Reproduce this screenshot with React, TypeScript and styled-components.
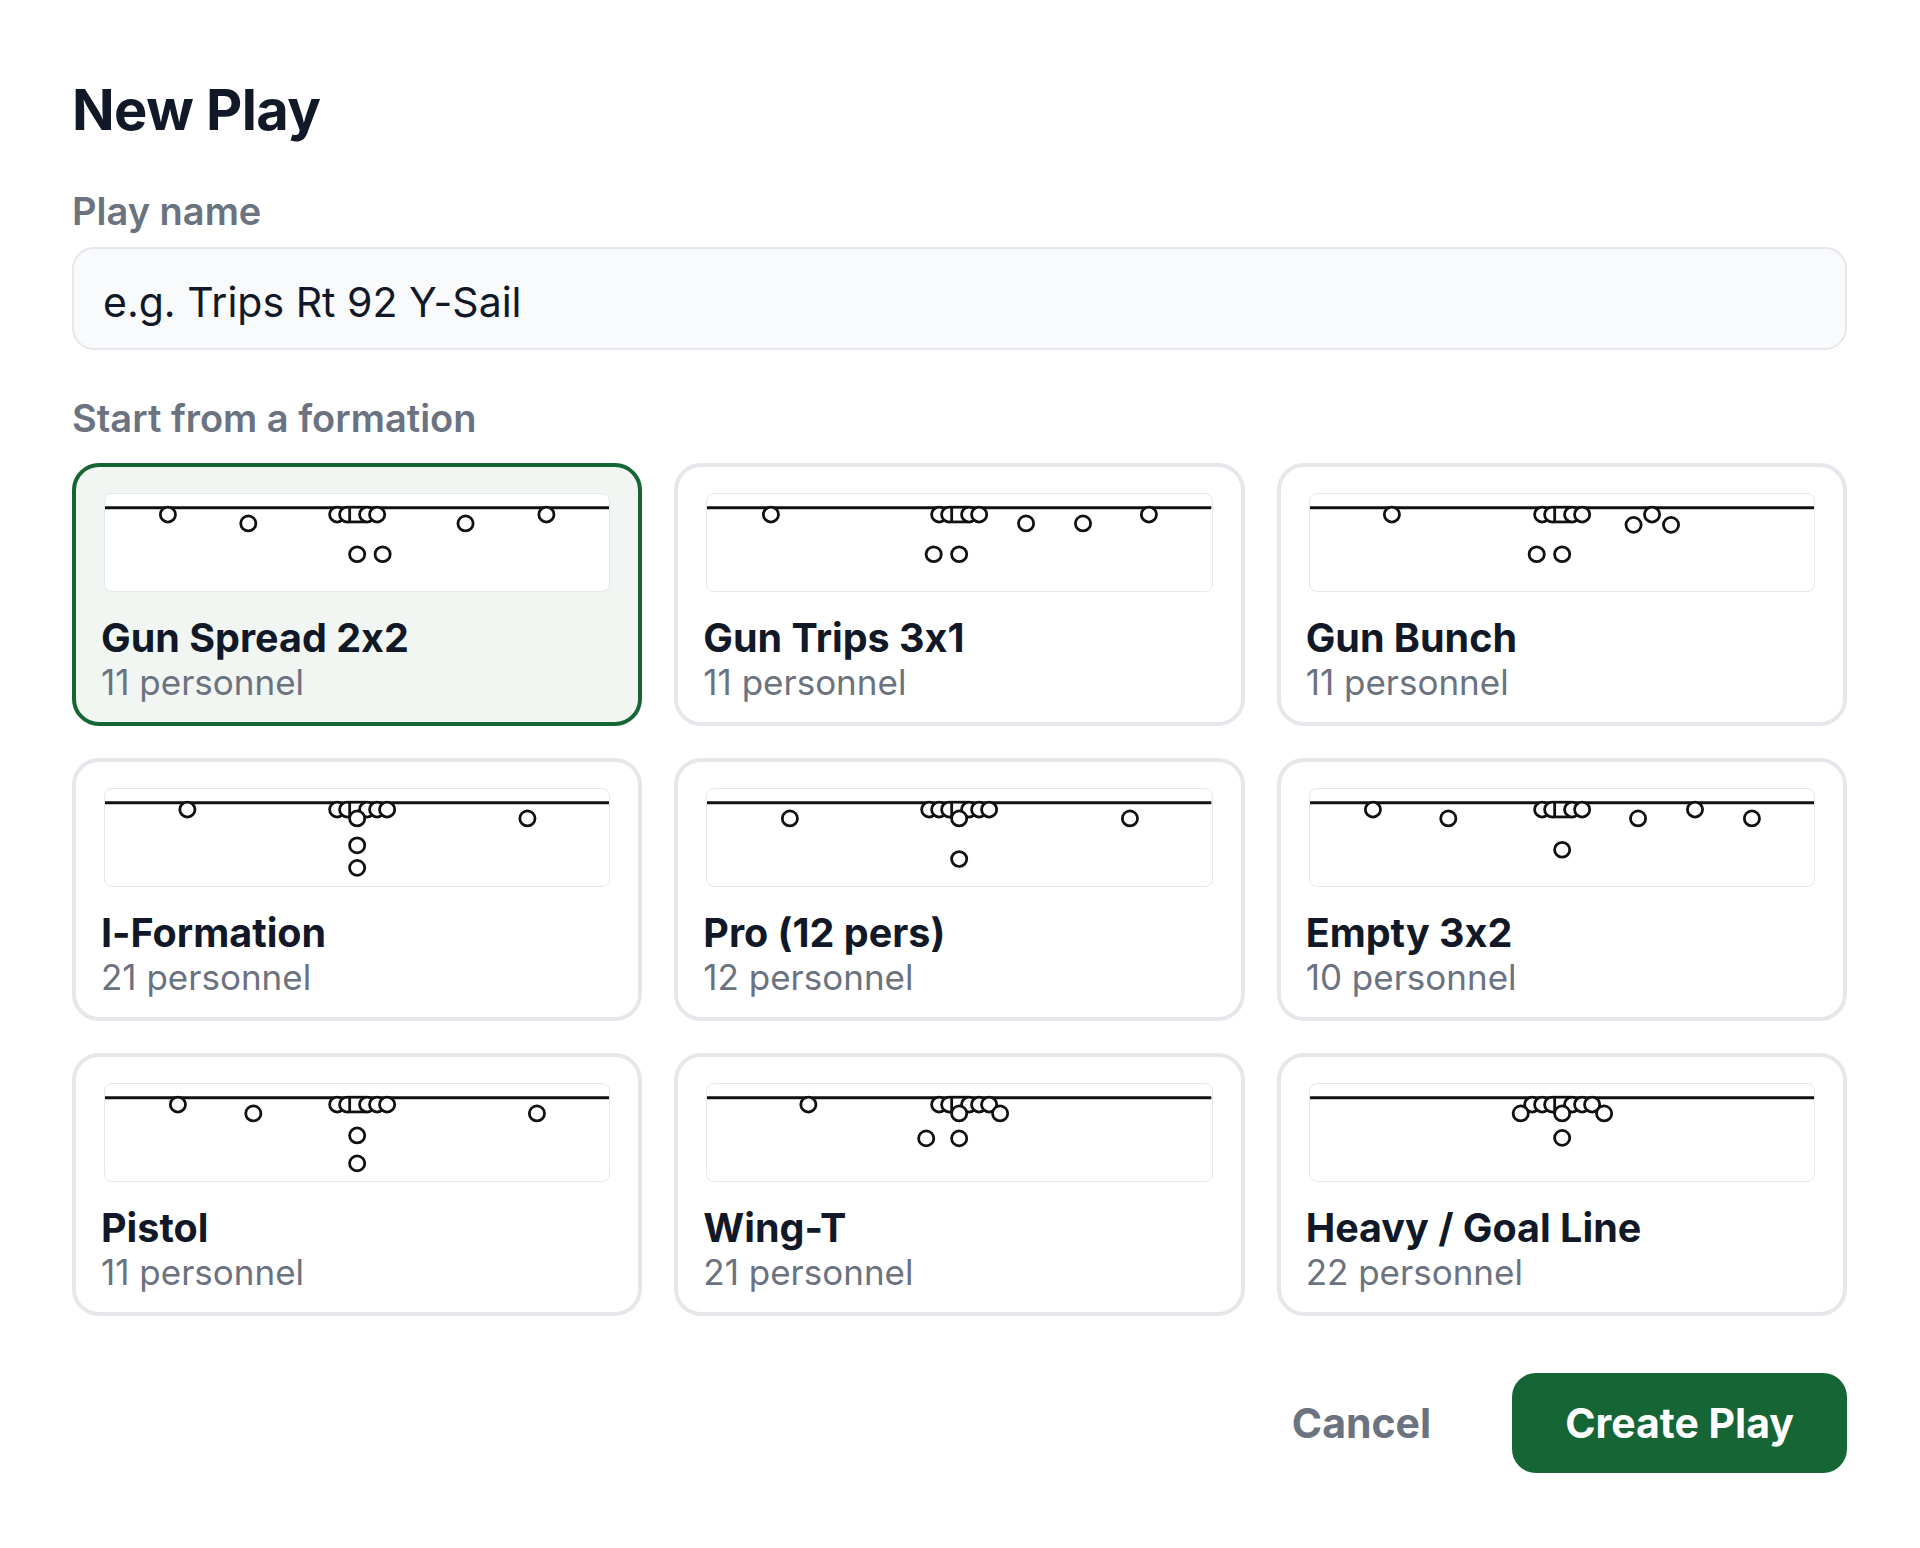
import React, { useState } from 'react';
import styled, { createGlobalStyle } from 'styled-components';

const GlobalStyle = createGlobalStyle`
	* {
		box-sizing: border-box;
		font-feature-settings: "calt" 0;
		font-variant-ligatures: no-contextual;
	}
	body {
		margin: 0;
		background: #ffffff;
		font-family: Inter, "Noto Sans", "Liberation Sans", sans-serif;
		color: #111827;
	}
`;

type Player = { x: number; y: number; c?: boolean };

interface Formation {
	name: string;
	personnel: string;
	players: Player[];
}

// preview coordinates: 505 wide, 99 tall, line of scrimmage at y=14
const ON = 21;
const OFF = 30;

const ol5 = (): Player[] => [
	{ x: 232.5, y: ON },
	{ x: 242.5, y: ON },
	{ x: 252.5, y: ON, c: true },
	{ x: 262.5, y: ON },
	{ x: 272.5, y: ON },
];
const line6 = (): Player[] => [...ol5(), { x: 282.5, y: ON }];
const line7 = (): Player[] => [{ x: 222.5, y: ON }, ...ol5(), { x: 282.5, y: ON }];

const formations: Formation[] = [
	{
		name: 'Gun Spread 2x2',
		personnel: '11 personnel',
		players: [
			{ x: 63, y: ON },
			{ x: 143.5, y: OFF },
			...ol5(),
			{ x: 361, y: OFF },
			{ x: 442, y: ON },
			{ x: 252.5, y: 61.5 },
			{ x: 278, y: 61.5 },
		],
	},
	{
		name: 'Gun Trips 3x1',
		personnel: '11 personnel',
		players: [
			{ x: 64, y: ON },
			...ol5(),
			{ x: 319.5, y: OFF },
			{ x: 376.5, y: OFF },
			{ x: 442.5, y: ON },
			{ x: 227, y: 61.5 },
			{ x: 252.5, y: 61.5 },
		],
	},
	{
		name: 'Gun Bunch',
		personnel: '11 personnel',
		players: [
			{ x: 82, y: ON },
			...ol5(),
			{ x: 324, y: 31.5 },
			{ x: 342.5, y: ON },
			{ x: 361.5, y: 31.5 },
			{ x: 227, y: 61.5 },
			{ x: 252.5, y: 61.5 },
		],
	},
	{
		name: 'I-Formation',
		personnel: '21 personnel',
		players: [
			{ x: 82.5, y: ON },
			...line6(),
			{ x: 252.5, y: OFF },
			{ x: 423, y: OFF },
			{ x: 252.5, y: 57.5 },
			{ x: 252.5, y: 80.5 },
		],
	},
	{
		name: 'Pro (12 pers)',
		personnel: '12 personnel',
		players: [
			{ x: 83, y: OFF },
			...line7(),
			{ x: 252.5, y: OFF },
			{ x: 423.5, y: OFF },
			{ x: 252.5, y: 71.5 },
		],
	},
	{
		name: 'Empty 3x2',
		personnel: '10 personnel',
		players: [
			{ x: 63, y: ON },
			{ x: 138.5, y: OFF },
			...ol5(),
			{ x: 328.5, y: OFF },
			{ x: 385.5, y: ON },
			{ x: 442.5, y: OFF },
			{ x: 252.5, y: 62 },
		],
	},
	{
		name: 'Pistol',
		personnel: '11 personnel',
		players: [
			{ x: 73, y: ON },
			{ x: 148.5, y: OFF },
			...line6(),
			{ x: 432.5, y: OFF },
			{ x: 252.5, y: 52.5 },
			{ x: 252.5, y: 81 },
		],
	},
	{
		name: 'Wing-T',
		personnel: '21 personnel',
		players: [
			{ x: 101.5, y: ON },
			...line6(),
			{ x: 252.5, y: OFF },
			{ x: 293.5, y: OFF },
			{ x: 219.5, y: 55.5 },
			{ x: 252.5, y: 55.5 },
		],
	},
	{
		name: 'Heavy / Goal Line',
		personnel: '22 personnel',
		players: [
			...line7(),
			{ x: 211, y: OFF },
			{ x: 294.5, y: OFF },
			{ x: 252.5, y: OFF },
			{ x: 252.5, y: 55 },
		],
	},
];

const FieldDiagram: React.FC<{ players: Player[] }> = ({ players }) => (
	<svg width='100%' height='100%' viewBox='0 0 505 99' preserveAspectRatio='none'>
		<line x1='0' y1='14' x2='505' y2='14' stroke='#111111' strokeWidth='3' />
		{players.map((p, i) =>
			p.c ? (
				<rect key={i} x={p.x - 7.5} y={p.y - 7.5} width='15' height='15' fill='#fff' stroke='#111' strokeWidth='2.8' />
			) : (
				<circle key={i} cx={p.x} cy={p.y} r='7.6' fill='#fff' stroke='#111' strokeWidth='2.8' />
			)
		)}
	</svg>
);

const App: React.FC = () => {
	const [selected, setSelected] = useState(0);
	const [name, setName] = useState('');

	return (
		<>
			<GlobalStyle />
			<Page>
				<Title>New Play</Title>
				<FieldLabel htmlFor='play-name'>Play name</FieldLabel>
				<NameInput
					id='play-name'
					value={name}
					placeholder='e.g. Trips Rt 92 Y-Sail'
					onChange={(e) => setName(e.target.value)}
				/>
				<SectionLabel>Start from a formation</SectionLabel>
				<FormationGrid>
					{formations.map((f, i) => (
						<FormationCard key={f.name} $selected={i === selected} onClick={() => setSelected(i)}>
							<Preview>
								<FieldDiagram players={f.players} />
							</Preview>
							<CardTitle>{f.name}</CardTitle>
							<CardMeta>{f.personnel}</CardMeta>
						</FormationCard>
					))}
				</FormationGrid>
				<Actions>
					<GhostButton>Cancel</GhostButton>
					<PrimaryButton>Create Play</PrimaryButton>
				</Actions>
			</Page>
		</>
	);
};

export default App;

const Page = styled.div`
	width: 1920px;
	padding: 76px 73px 75px 72px;
	display: flex;
	flex-direction: column;
`;

const Title = styled.h1`
	margin: 0;
	font-size: 56px;
	line-height: 68px;
	font-weight: 700;
	color: #111827;
	letter-spacing: -0.01em;
`;

const FieldLabel = styled.label`
	display: block;
	margin-top: 44px;
	font-size: 38px;
	line-height: 46px;
	font-weight: 600;
	color: #6b7280;
`;

const SectionLabel = styled.div`
	margin-top: 45px;
	font-size: 38px;
	line-height: 46px;
	font-weight: 600;
	color: #6b7280;
`;

const NameInput = styled.input`
	display: block;
	margin-top: 13px;
	width: 100%;
	height: 103px;
	padding: 6px 29px 0;
	border: 2.5px solid #e5e7eb;
	border-radius: 22px;
	background: #f9fafb;
	font-family: inherit;
	font-size: 41px;
	color: #111827;
	outline: none;
	&::placeholder {
		color: #111827;
		opacity: 1;
	}
`;

const FormationGrid = styled.div`
	margin-top: 22px;
	display: grid;
	grid-template-columns: repeat(3, 1fr);
	gap: 32px;
`;

const FormationCard = styled.button<{ $selected: boolean }>`
	height: 263px;
	display: flex;
	flex-direction: column;
	align-items: stretch;
	padding: 26px 28px 0;
	border: 4px solid ${({ $selected }) => ($selected ? '#166534' : '#e5e7eb')};
	border-radius: 27px;
	background: ${({ $selected }) => ($selected ? '#f1f6f3' : '#ffffff')};
	text-align: left;
	font-family: inherit;
	cursor: pointer;
`;

const Preview = styled.div`
	height: 99px;
	background: #ffffff;
	border: 1.5px solid #e5e7eb;
	border-radius: 8px;
	overflow: hidden;
	svg {
		display: block;
	}
`;

const CardTitle = styled.div`
	margin-top: 23px;
	margin-left: -3px;
	font-size: 39.5px;
	line-height: 46px;
	font-weight: 700;
	color: #111827;
	font-feature-settings: "calt" 0;
	font-variant-ligatures: no-contextual;
`;

const CardMeta = styled.div`
	margin-left: -3px;
	font-size: 35px;
	line-height: 42px;
	font-weight: 400;
	color: #6b7280;
`;

const Actions = styled.div`
	margin-top: 57px;
	display: flex;
	justify-content: flex-end;
	gap: 28px;
`;

const BaseButton = styled.button`
	height: 100px;
	padding: 0 53px;
	border: none;
	border-radius: 24px;
	font-family: inherit;
	font-size: 41px;
	font-weight: 700;
	cursor: pointer;
`;

const GhostButton = styled(BaseButton)`
	background: transparent;
	color: #6b7280;
`;

const PrimaryButton = styled(BaseButton)`
	background: #166534;
	color: #ffffff;
`;
